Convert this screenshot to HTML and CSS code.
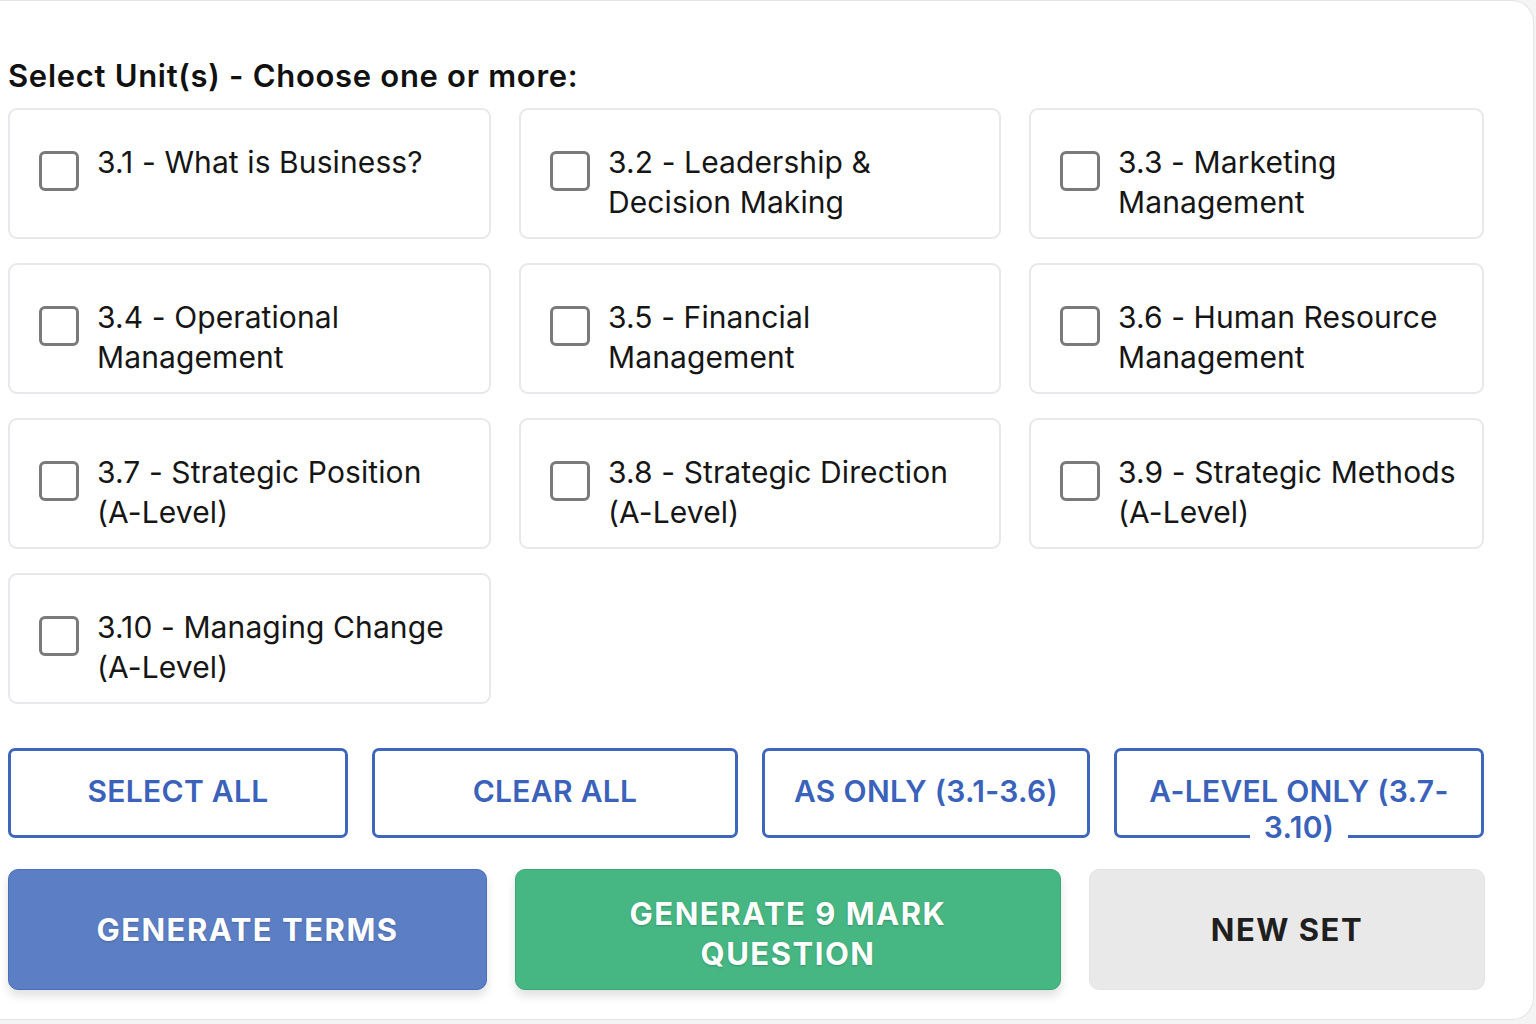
FILE: index.html
```html
<!DOCTYPE html>
<html lang="en">
<head>
<meta charset="utf-8">
<title>Select Units</title>
<link rel="stylesheet" href="styles.css">
</head>
<body>
<div class="panel">
  <h2 class="heading">Select Unit(s) - Choose one or more:</h2>
  <div class="unit-grid">
    <label class="unit"><span class="box"></span><span class="unit-text">3.1 - What is Business?</span></label>
    <label class="unit"><span class="box"></span><span class="unit-text">3.2 - Leadership &amp; Decision Making</span></label>
    <label class="unit"><span class="box"></span><span class="unit-text">3.3 - Marketing Management</span></label>
    <label class="unit"><span class="box"></span><span class="unit-text">3.4 - Operational Management</span></label>
    <label class="unit"><span class="box"></span><span class="unit-text">3.5 - Financial Management</span></label>
    <label class="unit"><span class="box"></span><span class="unit-text">3.6 - Human Resource Management</span></label>
    <label class="unit"><span class="box"></span><span class="unit-text">3.7 - Strategic Position <span class="nowrap">(A-Level)</span></span></label>
    <label class="unit"><span class="box"></span><span class="unit-text">3.8 - Strategic Direction <span class="nowrap">(A-Level)</span></span></label>
    <label class="unit"><span class="box"></span><span class="unit-text">3.9 - Strategic Methods <span class="nowrap">(A-Level)</span></span></label>
    <label class="unit"><span class="box"></span><span class="unit-text">3.10 - Managing Change <span class="nowrap">(A-Level)</span></span></label>
  </div>
  <div class="quick-row">
    <button class="outline-btn"><span class="lbl-wrap"><span class="lbl">SELECT ALL</span></span></button>
    <button class="outline-btn"><span class="lbl-wrap"><span class="lbl">CLEAR ALL</span></span></button>
    <button class="outline-btn"><span class="lbl-wrap"><span class="lbl nowrap">AS ONLY (3.1-3.6)</span></span></button>
    <button class="outline-btn"><span class="lbl-wrap"><span class="lbl">A-LEVEL ONLY (3.7-3.10)</span></span></button>
  </div>
  <div class="action-row">
    <button class="action-btn blue">GENERATE TERMS</button>
    <button class="action-btn green">GENERATE 9 MARK QUESTION</button>
    <button class="action-btn grey">NEW SET</button>
  </div>
</div>
</body>
</html>
```
FILE: styles.css
```css
* { box-sizing: border-box; }
html, body { margin: 0; padding: 0; }
body {
  background: #f4f4f5;
  font-family: Inter, "Noto Sans", "Liberation Sans", sans-serif;
  color: #161616;
}
.panel {
  width: 1534px;
  height: 1020px;
  background: #ffffff;
  border-top: 1px solid #e4e4e7;
  border-right: 1px solid #e4e4e7;
  border-bottom: 1px solid #e4e4e7;
  border-radius: 0 22px 22px 0;
  padding: 55px 0 0 8px;
}
.heading {
  margin: 0 0 12px 0;
  font-size: 31px;
  line-height: 40px;
  font-weight: 600;
  color: #111;
  letter-spacing: 0.7px;
}
.nowrap { white-space: nowrap; }
.unit-grid {
  display: grid;
  grid-template-columns: 483px 482px 455px;
  grid-auto-rows: 131px;
  column-gap: 28px;
  row-gap: 24px;
}
.unit {
  display: flex;
  align-items: flex-start;
  gap: 18px;
  border: 2px solid #e6e8ec;
  border-radius: 9px;
  padding: 32px 14px 0 29px;
  background: #fff;
}
.box {
  flex: 0 0 40px;
  width: 40px;
  height: 40px;
  margin-top: 9px;
  border: 3px solid #7a7a7a;
  border-radius: 6px;
  background: #fff;
}
.unit-text {
  font-size: 30px;
  line-height: 40px;
  color: #161616;
  letter-spacing: 0.1px;
}
.quick-row {
  display: grid;
  grid-template-columns: 340px 366px 328px 370px;
  column-gap: 24px;
  margin-top: 44px;
}
.outline-btn {
  height: 90px;
  border: 3px solid #3f66bd;
  border-radius: 7px;
  background: #fff;
  color: #3a62ba;
  font-family: inherit;
  font-size: 30px;
  font-weight: 600;
  line-height: 36px;
  letter-spacing: 0.3px;
  padding: 22px 4px 0;
  text-align: center;
  overflow: visible;
  display: flex;
  align-items: flex-start;
  justify-content: center;
}
.lbl-wrap {
  display: block;
  text-align: center;
}
.lbl {
  background: #fff;
  padding: 0 14px;
  -webkit-box-decoration-break: clone;
  box-decoration-break: clone;
}
.action-row {
  display: grid;
  grid-template-columns: 479px 546px 396px;
  column-gap: 28px;
  margin-top: 31px;
}
.action-btn {
  height: 121px;
  border-radius: 10px;
  font-family: inherit;
  font-size: 31px;
  font-weight: 700;
  line-height: 40px;
  letter-spacing: 1.5px;
  padding: 0 40px;
  text-align: center;
}
.blue {
  background: #5b7ec4;
  border: 1px solid #4a6fbb;
  color: #fff;
  box-shadow: 0 6px 10px rgba(0,0,0,0.12);
  text-shadow: 0 1px 2px rgba(0,0,0,0.2);
}
.green {
  background: #46b683;
  border: 1px solid #3aa874;
  color: #fff;
  padding-top: 8px;
  box-shadow: 0 6px 10px rgba(0,0,0,0.12);
  text-shadow: 0 1px 2px rgba(0,0,0,0.2);
}
.grey {
  background: #e9e9ea;
  border: 1px solid #e4e4e5;
  color: #1f1f1f;
}
```
